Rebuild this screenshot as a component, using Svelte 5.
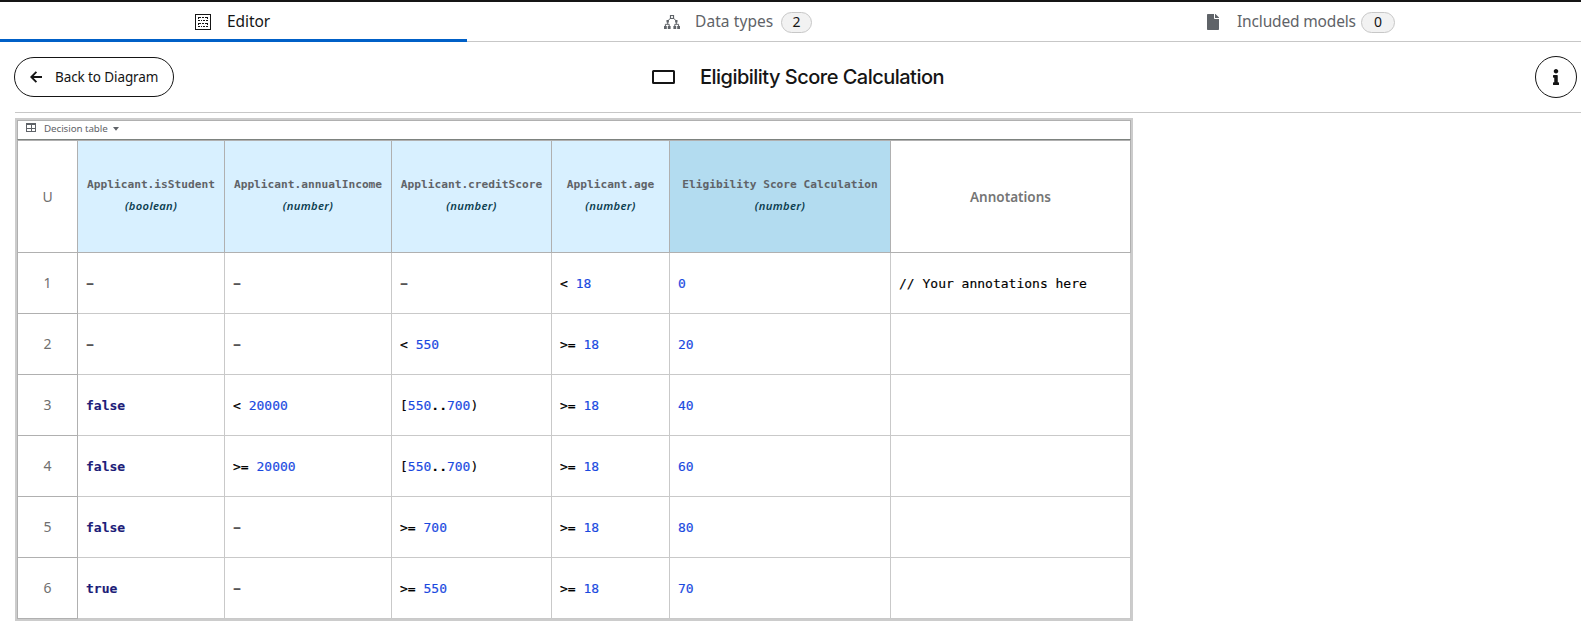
<script>
  const columns = [
    { name: 'Applicant.isStudent', type: 'boolean' },
    { name: 'Applicant.annualIncome', type: 'number' },
    { name: 'Applicant.creditScore', type: 'number' },
    { name: 'Applicant.age', type: 'number' },
    { name: 'Eligibility Score Calculation', type: 'number', output: true }
  ];
  const rows = [
    ['-', '-', '-', '< 18', '0', '// Your annotations here'],
    ['-', '-', '< 550', '>= 18', '20', ''],
    ['false', '< 20000', '[550..700)', '>= 18', '40', ''],
    ['false', '>= 20000', '[550..700)', '>= 18', '60', ''],
    ['false', '-', '>= 700', '>= 18', '80', ''],
    ['true', '-', '>= 550', '>= 18', '70', '']
  ];

  // Split a FEEL expression into tokens for highlighting.
  function tokens(text) {
    if (text === '-') return [{ text, kind: 'dash' }];
    if (text.startsWith('//')) return [{ text, kind: 'plain' }];
    return (text.match(/\d+|true|false|\.\.|[^\d.tf]+/g) ?? []).map((t) => ({
      text: t,
      kind: /^\d/.test(t) ? 'number' : /^[tf]/.test(t) ? 'keyword' : t === '..' ? 'range' : 'plain'
    }));
  }
</script>

<div class="page">
  <nav class="tabs">
    <div class="tab active">
      <svg class="ico" width="16" height="16" viewBox="0 0 16 16" fill="none" stroke="#151515" shape-rendering="crispEdges">
        <rect x=".5" y=".5" width="15" height="15" />
        <path d="M3 3.500h3M7 3.500h2M10 3.500h3M3 6.500h2M6 6.500h1M8 6.500h2M11 6.500h2M3.500 3v2M12.500 3v2M3 9.500h3M7 9.500h2M10 9.500h3M3 12.500h2M6 12.500h1M8 12.500h2M11 12.500h2M3.500 9v2M12.500 9v2" />
      </svg>
      <span class="label editor">Editor</span>
    </div>
    <div class="tab types">
      <svg class="ico" width="16" height="14" viewBox="0 0 16 14" fill="none" stroke="#5f6368">
        <path d="M6.500 .5h3v3h-3z" stroke-width="1.200" />
        <path d="M6.200 3.400L4 5.800M9.800 3.400L12 5.800M3.700 7v2M12.300 7v2M1.400 11V9.300h3.800V11M10.800 11V9.300h3.800V11" />
        <path fill="#5f6368" stroke="none" d="M2.500 5h2.400v2.400H2.500zM11.100 5h2.400v2.400h-2.400zM0 11h2.800v3H0zM3.800 11h2.800v3H3.800zM9.400 11h2.800v3H9.400zM13.200 11H16v3h-2.800z" />
      </svg>
      <span class="label data">Data types</span>
      <span class="badge">2</span>
    </div>
    <div class="tab models">
      <svg class="ico" width="12" height="16" viewBox="0 0 384 512" fill="#5f6368">
        <path d="M224 136V0H24C10.700 0 0 10.700 0 24v464c0 13.300 10.700 24 24 24h336c13.300 0 24-10.700 24-24V160H248c-13.200 0-24-10.800-24-24zm160-14.100v6.100H256V0h6.100c6.400 0 12.500 2.500 17 7l97.900 98c4.500 4.500 7 10.600 7 16.900z" />
      </svg>
      <span class="label included">Included models</span>
      <span class="badge wide">0</span>
    </div>
  </nav>

  <header>
    <button class="back">
      <svg width="12" height="12" viewBox="0 0 12 12" fill="none" stroke="#151515" stroke-width="1.900"><path d="M6.400 .8L1.300 6l5.100 5.200M1.500 6H12" /></svg>
      <span>Back to Diagram</span>
    </button>
    <div class="title">
      <svg width="23" height="14" viewBox="0 0 23 14"><rect x="1" y="1" width="21" height="12" rx=".5" fill="none" stroke="#151515" stroke-width="2" /></svg>
      <h1>Eligibility Score Calculation</h1>
    </div>
    <button class="info" aria-label="Properties">
      <svg width="6" height="16" viewBox="0 0 192 512" fill="#151515"><path d="M20 424.229h20V279.771H20c-11.046 0-20-8.954-20-20V212c0-11.046 8.954-20 20-20h112c11.046 0 20 8.954 20 20v212.229h20c11.046 0 20 8.954 20 20V492c0 11.046-8.954 20-20 20H20c-11.046 0-20-8.954-20-20v-47.771c0-11.046 8.954-20 20-20zM96 0C56.235 0 24 32.235 24 72s32.235 72 72 72 72-32.235 72-72S135.764 0 96 0z" /></svg>
    </button>
  </header>

  <main class="expression">
    <div class="kind">
      <svg width="10" height="9" viewBox="0 0 10 9" fill="none" stroke="#5f6368" shape-rendering="crispEdges"><path d="M.5 .5h9v8h-9zM0 1.500h10M0 5.500h10M5.500 2v7" /></svg>
      <span>Decision table</span>
      <svg class="caret" width="6" height="4" viewBox="0 0 6 4" fill="#5f6368"><path d="M0 0h6L3 3.700z" /></svg>
    </div>
    <div class="grid">
      <div class="cell head policy">U</div>
      {#each columns as column}
        <div class="cell head" class:input={!column.output} class:output={column.output}>
          <span class="name">{column.name}</span>
          <span class="type">({column.type})</span>
        </div>
      {/each}
      <div class="cell head notes"><span>Annotations</span></div>
      {#each rows as row, i}
        <div class="cell index">{i + 1}</div>
        {#each row as value}
          <div class="cell code">{#each tokens(value) as token}<span class={token.kind}>{token.text}</span>{/each}</div>
        {/each}
      {/each}
    </div>
  </main>
</div>

<style>
  :global(body) {
    background: #fff;
    overflow: hidden;
  }
  .page {
    width: 1581px;
    height: 631px;
    box-sizing: border-box;
    border-top: 2px solid #151515;
    overflow: hidden;
    font-family: 'Noto Sans', sans-serif;
    color: #151515;
  }
  .tabs {
    display: grid;
    grid-template-columns: 467px 542px 1fr;
    height: 40px;
  }
  .tab {
    display: flex;
    align-items: center;
    box-sizing: border-box;
    border-bottom: 1px solid #c7c7c7;
    color: #5f6368;
    font-size: 15.500px;
    white-space: nowrap;
  }
  .active {
    padding-left: 195px;
    padding-top: 2px;
    border-bottom: 3px solid #0060c7;
    color: #151515;
  }
  .types { padding-left: 197px; }
  .models { padding-left: 198px; }
  .ico { flex: none; }
  .label { line-height: 20px; margin-top: -1px; }
  .editor { margin-left: 16px; letter-spacing: -0.05px; }
  .data { margin-left: 15px; width: 79px; letter-spacing: 0.08px; }
  .included { margin-left: 18px; width: 117px; letter-spacing: -0.16px; }
  .badge {
    margin-left: 7px;
    margin-top: 1px;
    box-sizing: border-box;
    width: 31px;
    height: 21px;
    border: 1px solid #c7c7c7;
    border-radius: 11px;
    background: #f2f2f2;
    color: #151515;
    font-size: 14px;
    line-height: 18px;
    text-align: center;
  }
  .wide { width: 34px; }
  header {
    display: grid;
    grid-template-columns: 160px 1fr 42px;
    align-items: center;
    height: 70px;
    padding: 0 4px 0 14px;
    position: relative;
  }
  header::after {
    content: '';
    position: absolute;
    left: 15px;
    right: 0;
    bottom: -1px;
    height: 1px;
    background: #c7c7c7;
  }
  button {
    display: flex;
    align-items: center;
    box-sizing: border-box;
    border: 1px solid #151515;
    background: #fff;
    color: #151515;
    font-family: inherit;
    padding: 0;
  }
  .back {
    height: 40px;
    border-radius: 20px;
    padding-left: 15px;
    gap: 13px;
    font-size: 13.500px;
    letter-spacing: -0.1px;
    white-space: nowrap;
  }
  .back span { margin-top: -1px; }
  .title {
    display: flex;
    align-items: center;
    padding-left: 478px;
    gap: 25px;
  }
  .title svg { margin-top: -1px; }
  h1 {
    margin: 0;
    font-family: Inter, sans-serif;
    font-weight: 500;
    font-size: 20px;
    line-height: 26px;
    letter-spacing: -0.52px;
    white-space: nowrap;
  }
  .info {
    width: 42px;
    height: 42px;
    border-radius: 50%;
    justify-content: center;
  }
  .expression {
    box-sizing: border-box;
    width: 1118px;
    height: 503px;
    margin: 6px 0 0 15px;
    border: 2px solid #ccc;
  }
  .kind {
    display: flex;
    align-items: center;
    box-sizing: border-box;
    height: 20px;
    width: 1114px;
    padding-left: 8px;
    padding-bottom: 1px;
    border: 1px solid #b0b0b0;
    border-bottom-color: #7d827f;
    font-size: 9.800px;
    color: #5f6368;
  }
  .kind svg { margin-top: -4px; }
  .kind span { margin: -2px 0 0 8px; width: 63px; white-space: nowrap; letter-spacing: -0.08px; }
  .kind .caret { margin: -2px 0 0 6px; }
  .grid {
    display: grid;
    grid-template-columns: 61px 147px 167px 160px 118px 221px 240px;
    grid-template-rows: 113px repeat(6, 61px);
  }
  .cell {
    box-sizing: border-box;
    display: flex;
    align-items: center;
    border-right: 1px solid #c9c9c9;
    border-bottom: 1px solid #c9c9c9;
  }
  .head {
    flex-direction: column;
    justify-content: center;
    border-top: 1px solid #b0b0b0;
    border-right-color: #b0b0b0;
    border-bottom-color: #b0b0b0;
  }
  .input { background: #d8f0ff; }
  .output { background: #b3dcf0; }
  .policy, .index {
    justify-content: center;
    border-left: 1px solid #b0b0b0;
    border-right-color: #b0b0b0;
    border-bottom-color: #b0b0b0;
    color: #6f6f6f;
    font-size: 14px;
  }
  .index { padding-bottom: 1px; }
  .name {
    font-family: 'DejaVu Sans Mono', monospace;
    font-weight: 700;
    font-size: 11.200px;
    line-height: 20px;
    color: #5f6368;
    white-space: nowrap;
    margin-top: -3px;
  }
  .type {
    font-size: 11.200px;
    font-weight: 600;
    font-style: italic;
    line-height: 20px;
    letter-spacing: 0.35px;
    margin-top: 1px;
    color: #0b3d4f;
  }
  .notes {
    color: #757575;
    font-weight: 600;
    font-size: 13.500px;
  }
  .code {
    padding-left: 8px;
    padding-top: 2px;
    font-family: 'DejaVu Sans Mono', monospace;
    font-size: 13px;
    line-height: 18px;
    color: #000;
    white-space: pre;
    -webkit-text-stroke: 0.150px currentColor;
  }
  .number { color: #1a49df; }
  .keyword { color: #1c1c78; font-weight: 700; }
  .range { font-weight: 700; }
  .dash {
    color: #555;
    font-weight: 700;
    transform: scaleX(1.600);
  }
</style>
